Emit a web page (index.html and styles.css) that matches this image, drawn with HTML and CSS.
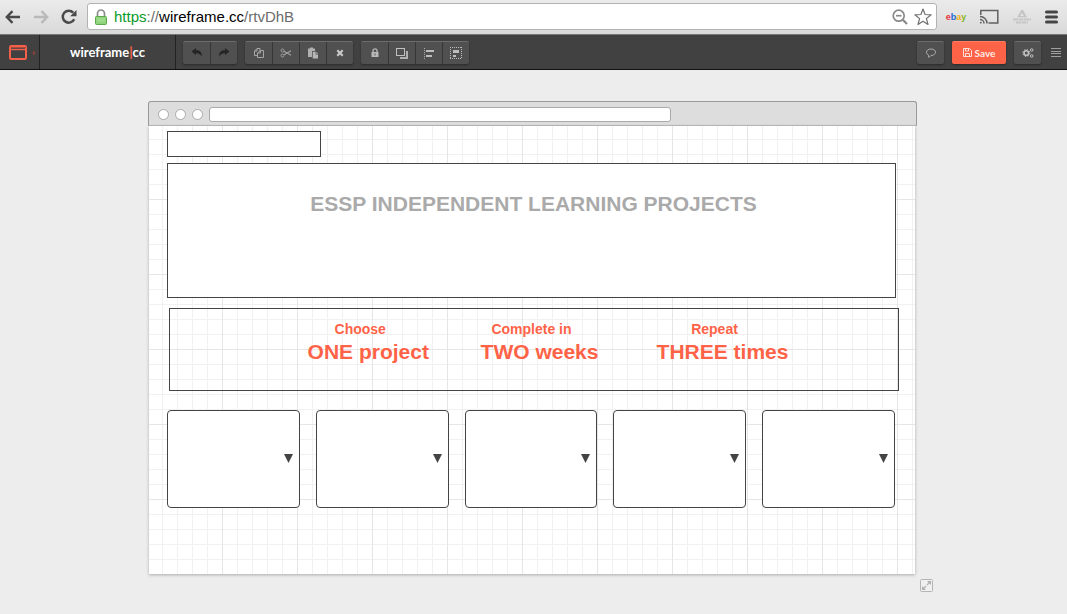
FILE: index.html
```html
<!DOCTYPE html>
<html lang="en">
<head>
<meta charset="utf-8">
<title>wireframe.cc</title>
<link rel="stylesheet" href="styles.css">
</head>
<body>
<header class="chrome">
  <button class="nav back" aria-label="Back"><svg width="16" height="14" viewBox="0 0 16 14" fill="none" stroke="#4a4a4a" stroke-width="2.4"><path d="M15 7H2M7.5 1.200 1.800 7l5.700 5.800"/></svg></button>
  <button class="nav forward" aria-label="Forward"><svg width="16" height="14" viewBox="0 0 16 14" fill="none" stroke="#b9b9b9" stroke-width="2.400"><path d="M1 7h13M8.500 1.200 14.200 7l-5.700 5.800"/></svg></button>
  <button class="nav reload" aria-label="Reload"><svg width="16" height="16" viewBox="0 0 16 16"><path d="M13.200 10.200A6 6 0 1 1 12.300 3.700" fill="none" stroke="#4a4a4a" stroke-width="2.500"/><path d="M15.500 1v6.300H9.200z" fill="#4a4a4a"/></svg></button>
  <div class="address">
    <svg width="12" height="16" viewBox="0 0 12 16"><path d="M2.500 8V4.500a3.500 3.500 0 0 1 7 0V8" fill="none" stroke="#8b8b8b" stroke-width="1.700"/><rect x=".5" y="7.500" width="11" height="8" rx="1" fill="#8fd37a" stroke="#5fa64c"/><path d="M2 10h8M2 12h8" stroke="#a9e397"/></svg>
    <div class="url" role="textbox" contenteditable="true" spellcheck="false" aria-label="Address"><span class="secure">https</span><span class="dim">://</span>wireframe.cc<span class="dim">/rtvDhB</span></div>
    <button class="icon" aria-label="Zoom out"><svg width="16" height="16" viewBox="0 0 16 16" fill="none" stroke="#8a8a8a" stroke-width="1.700"><circle cx="6.700" cy="6.700" r="5.500"/><path d="M4 6.700h5.500"/><path d="m10.800 10.800 4.200 4.200" stroke-width="2.300"/></svg></button>
    <button class="icon" aria-label="Bookmark"><svg width="18" height="18" viewBox="0 0 18 18" fill="#fff" stroke="#707070" stroke-width="1.200" stroke-linejoin="round"><path d="m9 1 2.100 5.500 6 .3-4.700 3.800 1.600 5.900L9 13.200l-5 3.300 1.600-5.900L.9 6.800l6-.3z"/></svg></button>
  </div>
  <div class="extensions">
    <button class="ebay" aria-label="ebay"><span class="e">e</span><span class="b">b</span><span class="a">a</span><span class="y">y</span></button>
    <button class="icon" aria-label="Cast"><svg width="20" height="16" viewBox="0 0 20 16" fill="none" stroke="#626262" stroke-width="1.500"><path d="M1.800 6V1.500h17v12.500H9.500"/><path d="M1 7.500a7 7 0 0 1 7 7M1 10.500a4 4 0 0 1 4 4"/><circle cx="1.800" cy="13.700" r=".9" fill="#626262" stroke="none"/></svg></button>
    <button class="icon" aria-label="Drive"><svg width="20" height="16" viewBox="0 0 20 16"><path d="M9.300 1h1.700L15 8.200H5.200z" fill="#c4c4c4"/><path d="M10 4 8 7h4z" fill="#e2e2e2"/><path d="M1 10.500h18M4 13.500h12" stroke="#c6c6c6" stroke-width="1.800" stroke-dasharray="5 .5"/></svg></button>
    <button class="icon" aria-label="Menu"><svg width="13" height="14" viewBox="0 0 13 14" stroke="#454545" stroke-width="3" stroke-linecap="round"><path d="M1.500 2h10M1.500 7h10M1.500 12h10"/></svg></button>
  </div>
</header>

<nav class="toolbar">
  <button class="stencil" aria-label="Browser frame"><svg width="27" height="15" viewBox="0 0 27 15"><rect x="1" y="1" width="16" height="13" rx="1.200" fill="none" stroke="#f4604a" stroke-width="2"/><path d="M1 4.500h16" stroke="#f4604a" stroke-width="1.400"/><path d="M2 2.500h15" stroke="#a84a3c"/><path d="M24 5.500v5l3-2.500z" fill="#8a4238"/></svg></button>
  <a class="brand" href="#">wireframe<span class="bar">|</span>cc</a>
  <div class="group">
    <button aria-label="Undo"><svg width="12" height="12" viewBox="0 0 12 12"><path d="M.5 4.500 5 1v2.300c4 0 6.200 1.800 5.800 6.700C9.800 7.300 8 6.200 5 6.200V8z" fill="#252525"/></svg></button>
    <button aria-label="Redo"><svg width="12" height="12" viewBox="0 0 12 12"><path d="M11.500 4.500 7 1v2.300c-4 0-6.200 1.800-5.800 6.700C2.200 7.300 4 6.200 7 6.200V8z" fill="#252525"/></svg></button>
  </div>
  <div class="group">
    <button aria-label="Copy"><svg width="12" height="12" viewBox="0 0 12 12" fill="none" stroke="#a5a5a5"><path d="M4.500 8.500h-3V4l2.500-2.500h3V4M4 1.500V4H1.500"/><path d="M7.500 3.500h3v7h-6V6zM7.500 3.500V6h-3"/></svg></button>
    <button aria-label="Cut"><svg width="12" height="12" viewBox="0 0 12 12" fill="none" stroke="#a0a0a0"><circle cx="2.500" cy="3.500" r="1.500"/><circle cx="2.500" cy="8.500" r="1.500"/><path d="m4 4.300 7 4M4 7.700l7-4" stroke-width="1.300"/></svg></button>
    <button aria-label="Paste"><svg width="12" height="12" viewBox="0 0 12 12"><path d="M1 1.500h2V.5h3v1h2V4H5v6H1z" fill="#b0b0b0"/><path d="M5.700 4.700h3V7.500H11v4H5.700z" fill="#b5b5b5"/><path d="M9.400 4.700 11.300 6.800H9.400z" fill="#b5b5b5"/></svg></button>
    <button aria-label="Delete"><svg width="12" height="12" viewBox="0 0 12 12"><path d="m3.300 3.300 5.400 5.400M8.700 3.300 3.300 8.700" stroke="#c8c8c8" stroke-width="2.200"/></svg></button>
  </div>
  <div class="group">
    <button aria-label="Lock"><svg width="12" height="12" viewBox="0 0 12 12"><path d="M4 6V3.800a2 2 0 0 1 4 0V6" fill="none" stroke="#b8b8b8" stroke-width="1.300"/><rect x="2.500" y="5" width="7" height="5" rx=".5" fill="#b8b8b8"/><path d="M6 6.500v2" stroke="#555"/></svg></button>
    <button aria-label="Arrange"><svg width="12" height="12" viewBox="0 0 12 12"><path d="M10 4h2v8H4v-2h6z" fill="#b0b0b0"/><rect x=".5" y="1.500" width="8" height="7" fill="#505050" stroke="#c0c0c0"/></svg></button>
    <button aria-label="Align"><svg width="12" height="12" viewBox="0 0 12 12"><path d="M1.500 1v11" stroke="#aaa" stroke-dasharray="1 1"/><path d="M3 3h8v2H3zM3 8h6v2H3z" fill="#bcbcbc"/></svg></button>
    <button aria-label="Select group"><svg width="12" height="12" viewBox="0 0 12 12"><path d="M0 .5h12M0 11.500h12M.5 0v12M11.500 0v12" fill="none" stroke="#bcbcbc" stroke-dasharray="1 1"/><path d="M3 3h6v3H3zM3 8h3v2H3z" fill="#bcbcbc"/></svg></button>
  </div>
  <div class="actions">
    <button class="tool" aria-label="Comments"><svg width="12" height="12" viewBox="0 0 12 12"><path d="M6 2c2.700 0 4.500 1.400 4.500 3.200S8.700 8.500 6 8.500c-.6 1-1.600 1.600-2.800 1.700.5-.6.700-1.200.7-1.900C2.400 7.700 1.500 6.500 1.500 5.200 1.500 3.400 3.300 2 6 2z" fill="none" stroke="#adadad"/></svg></button>
    <button class="save"><svg width="9" height="9" viewBox="0 0 9 9" fill="none" stroke="#ffe0da"><path d="M.5.5h6l2 2v6h-8z"/><path d="M2.500.5v2.500h3V.5M2.500 8.500V5.500h4v3"/></svg>Save</button>
    <button class="tool" aria-label="Settings"><svg width="12" height="12" viewBox="0 0 12 12" fill="none" stroke="#c0c0c0"><circle cx="4.300" cy="6" r="2.300" stroke-width="1.600"/><circle cx="4.300" cy="6" r="3.500" stroke-dasharray="1.400 1.350"/><circle cx="9.700" cy="3" r="1.300"/><circle cx="9.700" cy="9" r="1.300"/></svg></button>
    <button class="menu" aria-label="Menu"><svg width="10" height="9" viewBox="0 0 10 9" stroke="#a0a0a0"><path d="M0 .5h10M0 3.500h10M0 5.500h10M0 8.500h10"/></svg></button>
  </div>
</nav>

<main class="workspace">
  <section class="frame">
    <div class="frame-bar">
      <span class="dot"></span><span class="dot"></span><span class="dot"></span>
      <input class="frame-url" type="text" aria-label="Frame address">
    </div>
    <div class="canvas">
      <div class="box logo-box"></div>
      <div class="box hero"><h1>ESSP INDEPENDENT LEARNING PROJECTS</h1></div>
      <div class="box steps">
        <p class="step"><span class="lead">Choose</span><span class="goal">ONE project</span></p>
        <p class="step"><span class="lead">Complete in</span><span class="goal">TWO weeks</span></p>
        <p class="step"><span class="lead">Repeat</span><span class="goal">THREE times</span></p>
      </div>
      <div class="choices">
        <div class="choice"><select aria-label="Project 1"></select><svg class="arrow" width="9" height="9" viewBox="0 0 9 9"><path d="M0 0h9L4.500 9z"/></svg></div>
        <div class="choice"><select aria-label="Project 2"></select><svg class="arrow" width="9" height="9" viewBox="0 0 9 9"><path d="M0 0h9L4.500 9z"/></svg></div>
        <div class="choice"><select aria-label="Project 3"></select><svg class="arrow" width="9" height="9" viewBox="0 0 9 9"><path d="M0 0h9L4.500 9z"/></svg></div>
        <div class="choice"><select aria-label="Project 4"></select><svg class="arrow" width="9" height="9" viewBox="0 0 9 9"><path d="M0 0h9L4.500 9z"/></svg></div>
        <div class="choice"><select aria-label="Project 5"></select><svg class="arrow" width="9" height="9" viewBox="0 0 9 9"><path d="M0 0h9L4.500 9z"/></svg></div>
      </div>
    </div>
    <button class="resize" aria-label="Resize"><svg width="13" height="13" viewBox="0 0 13 13"><rect x=".5" y=".5" width="12" height="12" rx="1" fill="#f0f0f0" stroke="#b5b5b5"/><path d="M3.500 9.500 6 7M7 6l2.500-2.500" stroke="#b0b0b0" stroke-width="1.300"/><path d="M7 2h4v4zM2 7v4h4z" fill="#b0b0b0"/></svg></button>
  </section>
</main>
</body>
</html>
```
FILE: styles.css
```css
* { box-sizing: border-box; }

body {
  margin: 0;
  min-height: 100vh;
  background: #ededed;
  font-family: "Liberation Sans", Arial, sans-serif;
}

button {
  display: flex;
  align-items: center;
  justify-content: center;
  margin: 0;
  padding: 0;
  border: 0;
  background: none;
  font: inherit;
}

svg { display: block; flex: none; }

.chrome {
  display: flex;
  align-items: center;
  height: 34px;
  padding: 0 9px 1px 5px;
  background: linear-gradient(#ebebeb, #d9d9d9);
}

.nav { width: 16px; }
.forward { margin-left: 12px; }
.reload { margin-left: 12px; }

.address {
  display: flex;
  flex: 1;
  align-items: center;
  gap: 6px;
  height: 27px;
  margin-left: 10px;
  padding: 0 4px 0 7px;
  border: 1px solid #b3b3b3;
  border-radius: 3px;
  background: #fff;
}

.url {
  flex: 1;
  padding-left: 1px;
  font-size: 15px;
  line-height: 20px;
  color: #000;
  white-space: nowrap;
  outline: 0;
}

.secure { color: #0a9a2a; }
.dim { color: #6b6b6b; }

.extensions {
  display: flex;
  align-items: center;
  gap: 13px;
  margin-left: 9px;
}

.ebay { width: 20px; font-size: 9px; font-weight: bold; line-height: 12px; }
.e { color: #e5383f; }
.b { color: #2268d0; }
.a { color: #f0ae1c; }
.y { color: #86b81b; }

.toolbar {
  display: flex;
  align-items: center;
  height: 36px;
  border-top: 1px solid #777;
  border-bottom: 1px solid #111;
  background: #414141;
}

.stencil {
  width: 40px;
  height: 34px;
  padding-left: 6px;
  border-right: 1px solid #222;
}

.brand {
  width: 136px;
  margin-right: 7px;
  border-right: 1px solid #222;
  color: #fff;
  font: bold 13px/34px Lato, sans-serif;
  text-align: center;
  text-decoration: none;
}

.bar { color: #ff6347; }

.group {
  display: flex;
  border-top: 1px solid #6c6c6c;
  border-radius: 2px;
  background: #505050;
  box-shadow: 0 1px 2px #2a2a2a;
}

.group + .group { margin-left: 8px; }
.group button { width: 27px; height: 22px; }
.group button + button { border-left: 1px solid #363636; }

.actions {
  display: flex;
  align-items: center;
  gap: 8px;
  margin-left: auto;
  padding-right: 6px;
}

.tool, .save {
  width: 27px;
  height: 23px;
  border-top: 1px solid #6c6c6c;
  border-radius: 2px;
  background: #505050;
  box-shadow: 0 1px 2px #2a2a2a;
}

.menu { padding-left: 2px; }

.save {
  gap: 3px;
  width: 54px;
  border-color: #ff7c65;
  background: #ff6347;
  color: #ffe9e4;
  font: bold 10px/12px Lato, sans-serif;
}

.workspace { padding: 31px 150px 0 148px; }

.frame { position: relative; }

.frame-bar {
  display: flex;
  align-items: center;
  gap: 6px;
  height: 25px;
  padding: 2px 0 0 9px;
  border: 1px solid #999;
  border-bottom-color: #b5b5b5;
  border-radius: 3px 3px 0 0;
  background: #ddd;
}

.dot {
  width: 11px;
  height: 11px;
  border: 1px solid #aaa;
  border-radius: 50%;
  background: #fff;
}

.frame-url {
  width: 61%;
  height: 15px;
  padding: 0 4px;
  border: 1px solid #aaa;
  border-radius: 3px;
  background: #fff;
}

.canvas {
  margin: 0 2px 0 1px;
  padding: 5px 16px 66px 18px;
  background-color: #fff;
  background-image:
    linear-gradient(90deg, #e6e6e6 1px, transparent 1px),
    linear-gradient(#e6e6e6 1px, transparent 1px),
    linear-gradient(90deg, #f1f1f1 1px, transparent 1px),
    linear-gradient(#f1f1f1 1px, transparent 1px);
  background-size: 75px 75px, 75px 75px, 15px 15px, 15px 15px;
  background-position: 73px 73px, 73px 73px, 13px 13px, 13px 13px;
  box-shadow: 0 1px 3px #aaa;
}

.box { border: 1px solid #444; }

.logo-box { width: 154px; height: 26px; background: #fff; }

.hero {
  height: 135px;
  margin: 6px 3px 0 0;
  padding: 28px 0 0 4px;
  background: #fff;
}

.hero h1 {
  margin: 0;
  color: #aaa;
  font-size: 21px;
  line-height: 24px;
  text-align: center;
}

.steps {
  display: grid;
  grid-template-columns: 173px 176px auto;
  justify-content: center;
  justify-items: start;
  align-content: start;
  height: 83px;
  margin: 10px 0 0 2px;
  padding: 11px 0 0 28px;
}

.step {
  display: flex;
  flex-direction: column;
  align-items: center;
  margin: 0;
  color: #ff6347;
  font-weight: bold;
}

.lead { padding-right: 16px; font-size: 14px; line-height: 18px; }
.goal { font-size: 21px; line-height: 28px; }

.choices {
  display: grid;
  grid-template-columns: repeat(5, 1fr);
  gap: 16px;
  margin: 19px 4px 0 0;
}

.choice { position: relative; }

.choice select {
  display: block;
  width: 100%;
  height: 98px;
  border: 1px solid #444;
  border-radius: 4px;
  background: #fff;
  appearance: none;
}

.arrow {
  position: absolute;
  top: 44px;
  right: 7px;
  fill: #444;
  pointer-events: none;
}

.resize {
  position: absolute;
  right: -16px;
  bottom: -18px;
}
```
